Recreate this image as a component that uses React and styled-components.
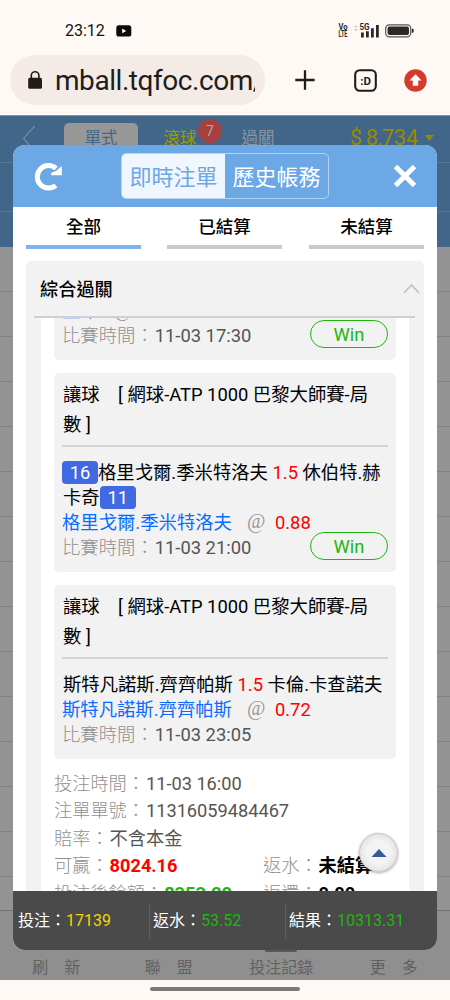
import React from 'react';
import styled, { createGlobalStyle } from 'styled-components';

const GlobalStyle = createGlobalStyle`
	* {
		box-sizing: border-box;
	}
	body {
		margin: 0;
		font-family: Roboto, "Noto Sans CJK TC", sans-serif;
		background: #fef9f5;
	}
`

const Phone = styled.div`
	position: relative;
	display: flex;
	flex-direction: column;
	width: 450px;
	height: 1000px;
	overflow: hidden;
	background: #fef9f5;
`

/* ---------- system and browser bars ---------- */

const StatusBar = styled.div`
	display: flex;
	align-items: center;
	height: 55px;
	padding: 7px 36px 0 65px;
`

const Clock = styled.span`
	width: 51px;
	font-size: 16px;
	line-height: 18px;
	color: #111;
`

const StatusIcons = styled.div`
	display: flex;
	align-items: center;
	margin-left: auto;
`

const AddressBar = styled.div`
	display: flex;
	align-items: center;
	height: 60px;
	padding: 0 23px 10px 10px;
`

const UrlPill = styled.div`
	display: flex;
	align-items: center;
	width: 255px;
	height: 50px;
	padding-left: 18px;
	border-radius: 25px;
	background: #f5ebe6;
`

const Url = styled.span`
	width: 200px;
	margin: 2px 0 0 12px;
	overflow: hidden;
	font-size: 28px;
	line-height: 34px;
	letter-spacing: -.45px;
	color: #201c1a;
	white-space: nowrap;
`

const BarButtons = styled.div`
	display: flex;
	flex: 1;
	align-items: center;
	justify-content: space-between;
	padding-left: 30px;
	svg:nth-child(2) {
		margin-left: 11px;
	}
`

/* ---------- dimmed page behind the dialog ---------- */

const Page = styled.div`
	display: flex;
	flex-direction: column;
	height: 865px;
	background: #939393;
`

const PageHeader = styled.div`
	height: 132px;
	border-top: 1px solid #8d9399;
	background: #416689;
`

const PageNav = styled.div`
	display: flex;
	height: 47px;
	padding: 7px 15px 0 22px;
	border-bottom: 1px solid #5a7690;
`

const PageNavLine = styled.div`
	height: 49px;
	border-bottom: 1px solid #5a7690;
`

const PageTab = styled.div`
	width: ${props => props.$width}px;
	height: 32px;
	margin-left: ${props => props.$left || 0}px;
	border-radius: 5px;
	background: ${props => props.$active ? '#979797' : 'none'};
	color: ${props => props.$color};
	font-size: 16.5px;
	line-height: 32px;
	text-align: center;
`

const PageBadge = styled.span`
	width: 24px;
	height: 24px;
	margin: -4px 0 0 1px;
	border-radius: 50%;
	background: #a4413f;
	color: #b3a4a4;
	font-size: 14px;
	line-height: 24px;
	text-align: center;
`

const Balance = styled.span`
	display: flex;
	gap: 4px;
	align-items: center;
	height: 29px;
	margin-left: auto;
	color: #998900;
	font-size: 22px;
	letter-spacing: -.3px;
	svg {
		margin-left: 1px;
	}
`

const PageRows = styled.div`
	flex: 1;
	overflow: hidden;
`

const PageRow = styled.div`
	height: 45px;
	border-bottom: 1px solid #818181;
`

const PageFooter = styled.div`
	display: flex;
	height: 70px;
	padding: 39px 0 0 0;
	border-top: 1px solid #737373;
	background: #8f8f8f;
`

const PageFooterItem = styled.div`
	position: relative;
	flex: 1;
	color: #616161;
	font-size: 16px;
	line-height: 35px;
	text-align: center;
	white-space: pre;
	&::before {
		content: "";
		position: absolute;
		top: -1px;
		left: 40px;
		width: 32px;
		height: 3px;
		border-radius: 2px;
		background: ${props => props.$active ? '#595959' : 'none'};
	}
`

const HomeBar = styled.div`
	width: 150px;
	height: 4px;
	margin: 7px auto 0;
	border-radius: 2px;
	background: #7d7876;
`

/* ---------- dialog ---------- */

const Dialog = styled.div`
	position: absolute;
	top: 145px;
	left: 13px;
	display: flex;
	flex-direction: column;
	width: 424px;
	height: 805px;
	border-radius: 12px;
	overflow: hidden;
	background: #fff;
`

const DialogHeader = styled.div`
	display: flex;
	flex: none;
	align-items: center;
	justify-content: space-between;
	height: 62px;
	padding: 0 20px 0 21px;
	background: #6ba8e5;
`

const Switch = styled.div`
	display: flex;
	width: 208px;
	height: 46px;
	margin-right: 6px;
	border: 1px solid #b5d4f2;
	border-radius: 5px;
	overflow: hidden;
`

const SwitchItem = styled.span`
	flex: 1;
	background: ${props => props.$active ? '#f0f6fd' : 'none'};
	color: ${props => props.$active ? '#6ba8e5' : '#fff'};
	font-size: 22px;
	line-height: 48px;
	text-align: center;
`

const Tabs = styled.div`
	display: flex;
	flex: none;
	gap: 26px;
	height: 42px;
	padding: 0 13px;
`

const Tab = styled.div`
	width: 115px;
	border-bottom: 4px solid ${props => props.$active ? '#7db2ea' : '#c9c9c9'};
	color: #000;
	font-size: 17.5px;
	font-weight: 500;
	line-height: 41px;
	text-align: center;
	&:last-child {
		margin-left: auto;
	}
`

const Group = styled.div`
	display: flex;
	flex: 1;
	flex-direction: column;
	min-height: 0;
	margin: 12px 13px 0;
	border-radius: 5px 5px 0 0;
	background: #f2f2f2;
`

const GroupHeader = styled.div`
	display: flex;
	flex: none;
	align-items: center;
	justify-content: space-between;
	height: 57px;
	margin: 0 9px 0 8px;
	padding: 0 0 1px 6px;
	border-bottom: 2px solid #d0d0d0;
	font-size: 18.2px;
	font-weight: 500;
	svg {
		margin-right: -5px;
	}
`

const Bets = styled.div`
	flex: 1;
	min-height: 0;
	margin: 0 15px;
	padding: 0 13px;
	overflow: hidden;
	background: #fff;
`

const Card = styled.div`
	margin-top: ${props => props.$scrolled ? '-20px' : '13px'};
	padding: ${props => props.$scrolled ? '0' : '7px'} 8px 12px;
	border-radius: 5px;
	background: #f2f2f2;
	font-size: 18.35px;
	line-height: 25px;
`

const CardTitle = styled.div`
	margin-bottom: 13px;
	padding: 0 1px 5px;
	border-bottom: 2px solid #d4d4d4;
	line-height: 30px;
	white-space: pre-wrap;
`

const Teams = styled.div`
	padding-left: ${props => props.$flush ? 0 : 1}px;
	white-space: nowrap;
`

const Score = styled.span`
	display: inline-block;
	width: 36px;
	height: 23px;
	border-radius: 4px;
	background: #4169e1;
	color: #fff;
	line-height: 23px;
	text-align: center;
`

const Line = styled.span`
	color: #f00;
`

const Pick = styled.div`
	display: flex;
	color: #0a6cff;
`

const At = styled.span`
	width: 18px;
	margin: -1px 10px 1px 15px;
	color: #999;
	font-family: "Liberation Serif", serif;
	font-size: 20px;
`

const Times = styled.div`
	display: flex;
	justify-content: space-between;
	height: 25px;
`

const Label = styled.span`
	color: #909090;
	font-weight: 300;
`

const Value = styled.span`
	margin-left: 1px;
	color: ${props => props.$color || '#555'};
	font-weight: ${props => props.$bold ? 700 : 400};
`

const Win = styled.span`
	width: 78px;
	height: 28px;
	margin-top: -3px;
	border: 1.5px solid #1fb60e;
	border-radius: 14px;
	color: #1fb60e;
	line-height: 27px;
	text-align: center;
`

const Details = styled.div`
	display: grid;
	grid-template-columns: 209px 1fr;
	margin-top: 11px;
	font-size: 18.2px;
	line-height: 27.4px;
	white-space: nowrap;
`

const Wide = styled.div`
	grid-column: 1 / 3;
`

const Totals = styled.div`
	display: flex;
	flex: none;
	align-items: center;
	height: 59px;
	background: #4a4a4a;
`

const Total = styled.div`
	width: 136px;
	height: 36px;
	padding-left: ${props => props.$first ? 5 : 3}px;
	border-left: ${props => props.$first ? 'none' : '1px solid #5e5e5e'};
	color: #fff;
	font-size: 16px;
	line-height: 35px;
	white-space: nowrap;
`

const TotalValue = styled.span`
	color: ${props => props.$color};
`

const TopButton = styled.div`
	position: absolute;
	top: 833px;
	left: 359px;
	display: flex;
	align-items: center;
	justify-content: center;
	width: 39px;
	height: 39px;
	border: 1px solid #c4c4c4;
	border-radius: 50%;
	background: radial-gradient(circle, #f3f3f3 45%, #e2e2e2 75%);
	box-shadow: 0 1px 3px rgba(0, 0, 0, .35);
`

const rows = Array.from({length: 15}, (_, i) => i);

const Pair = ({label, value, color, bold}) => (
    <div>
        <Label>{label}：</Label>
        <Value $color={color} $bold={bold}>{value}</Value>
    </div>
);

// the no-break space keeps the last character and the bracket on one line
const Bet = ({children, pick, odds, time, win}) => (
    <Card>
        <CardTitle>{'讓球　[ 網球-ATP 1000 巴黎大師賽-局數\u00a0]'}</CardTitle>
        {children}
        <Pick>{pick}<At>@</At><Line>{odds}</Line></Pick>
        <Times>
            <Pair label="比賽時間" value={time} />
            {win ? <Win>Win</Win> : null}
        </Times>
    </Card>
);

const Chrome = () => (
    <React.Fragment>
        <StatusBar>
            <Clock>23:12</Clock>
            <svg width="16" height="12" viewBox="0 0 16 12">
                <rect x="0.3" y="0.3" width="15" height="11.2" rx="2.6" fill="#0b0b0b" />
                <path d="M6.2 3.6v4.6L10.2 5.9z" fill="#fff" />
            </svg>
            <StatusIcons>
                <svg width="76" height="18" viewBox="0 0 76 18" fill="#2a2a2a" fontFamily="Roboto" fontWeight="700">
                    <text x="0.5" y="8" fontSize="8.6" textLength="9" lengthAdjust="spacingAndGlyphs">Vo</text>
                    <text x="0.5" y="15.4" fontSize="8.6" textLength="9" lengthAdjust="spacingAndGlyphs">LTE</text>
                    <path d="M16 5.2l2-2 2 2zM16 7.2l2 2 2-2z" fill="#c9c5c2" />
                    <text x="21.5" y="8" fontSize="8.5" textLength="10" lengthAdjust="spacingAndGlyphs">5G</text>
                    <path d="M23 10.5h2.8v5H23zM28 9.2h2.8v6.3H28zM33 6.3h2.8v9.2H33zM38 3h2.8v12.5H38z" />
                    <rect x="47.7" y="2.8" width="25" height="12" rx="3.6" fill="none" stroke="#555" strokeWidth="1.2" />
                    <rect x="49.6" y="4.6" width="21.4" height="8.4" rx="2" />
                    <path d="M73.8 6.6q2 0 2 2.2t-2 2.2z" />
                </svg>
            </StatusIcons>
        </StatusBar>
        <AddressBar>
            <UrlPill>
                <svg width="15" height="19" viewBox="0 0 15 19">
                    <rect x="0.2" y="6.8" width="13.8" height="11" rx="1.6" fill="#201c1a" />
                    <path d="M3.3 7V4.6a3.8 3.8 0 0 1 7.6 0V7" fill="none" stroke="#201c1a" strokeWidth="1.6" />
                </svg>
                <Url>mball.tqfoc.com/</Url>
            </UrlPill>
            <BarButtons>
                <svg width="20" height="20" viewBox="0 0 20 20">
                    <path d="M10 0.3v19.4M0.3 10h19.4" stroke="#201c1a" strokeWidth="2.3" />
                </svg>
                <svg width="23" height="23" viewBox="0 0 23 23">
                    <rect x="1.2" y="1.2" width="20.6" height="20.6" rx="4.5" fill="none" stroke="#201c1a" strokeWidth="2.1" />
                    <text x="11.5" y="15.5" fontSize="11.5" fontWeight="700" fontFamily="Roboto" textAnchor="middle" fill="#201c1a">:D</text>
                </svg>
                <svg width="23" height="23" viewBox="0 0 23 23">
                    <circle cx="11.5" cy="11.5" r="11.2" fill="#d33b2d" />
                    <path d="M11.5 5.3l6 6.3h-3.3v5.2H8.8v-5.2H5.5z" fill="#fff" />
                </svg>
            </BarButtons>
        </AddressBar>
    </React.Fragment>
);

const Background = () => (
    <Page>
        <PageHeader>
            <PageNav>
                <svg width="14" height="26" viewBox="0 0 14 26">
                    <path d="M12.7 3L1.5 15.5L9 24" fill="none" stroke="#7389a0" strokeWidth="1.3" />
                </svg>
                <PageTab $width={74} $left={28} $color="#416689" $active>單式</PageTab>
                <PageTab $width={34} $left={25} $color="#a09a00">滾球</PageTab>
                <PageBadge>7</PageBadge>
                <PageTab $width={34} $left={19} $color="#8a959f">過關</PageTab>
                <Balance>
                    <span>$</span>
                    <span>8,734</span>
                    <svg width="12" height="8" viewBox="0 0 12 8">
                        <path d="M2 1h9L6.5 7z" fill="#998900" />
                    </svg>
                </Balance>
            </PageNav>
            <PageNavLine />
        </PageHeader>
        <PageRows>
            {rows.map(row => <PageRow key={row} />)}
        </PageRows>
        <PageFooter>
            <PageFooterItem>刷　新</PageFooterItem>
            <PageFooterItem>聯　盟</PageFooterItem>
            <PageFooterItem $active>投注記錄</PageFooterItem>
            <PageFooterItem>更　多</PageFooterItem>
        </PageFooter>
    </Page>
);

const App = () => (
    <Phone>
        <GlobalStyle />
        <Chrome />
        <Background />
        <HomeBar />
        <Dialog>
            <DialogHeader>
                <svg width="29" height="29" viewBox="0 0 29 29">
                    <path d="M21.8 23.3A11.2 11.2 0 1 1 22 6.5" fill="none" stroke="#fff" strokeWidth="5" />
                    <path d="M27.8 4v9.2H17.2V10.8L22 9z" fill="#fff" />
                </svg>
                <Switch>
                    <SwitchItem $active>即時注單</SwitchItem>
                    <SwitchItem>歷史帳務</SwitchItem>
                </Switch>
                <svg width="24" height="24" viewBox="0 0 24 24">
                    <path d="M2.5 2.5l19 19M21.5 2.5l-19 19" stroke="#fff" strokeWidth="5" />
                </svg>
            </DialogHeader>
            <Tabs>
                <Tab $active>全部</Tab>
                <Tab>已結算</Tab>
                <Tab>未結算</Tab>
            </Tabs>
            <Group>
                <GroupHeader>
                    綜合過關
                    <svg width="17" height="11" viewBox="0 0 17 11">
                        <path d="M1 10L8.5 2L16 10" fill="none" stroke="#c4c4c4" strokeWidth="1.8" />
                    </svg>
                </GroupHeader>
                <Bets>
                    <Card $scrolled>
                        <Pick>里昂<At>@</At></Pick>
                        <Times>
                            <Pair label="比賽時間" value="11-03 17:30" />
                            <Win>Win</Win>
                        </Times>
                    </Card>
                    <Bet pick="格里戈爾.季米特洛夫" odds="0.88" time="11-03 21:00" win>
                        <Teams $flush><Score>16</Score>格里戈爾.季米特洛夫 <Line>1.5</Line> 休伯特.赫</Teams>
                        <Teams>卡奇<Score>11</Score></Teams>
                    </Bet>
                    <Bet pick="斯特凡諾斯.齊齊帕斯" odds="0.72" time="11-03 23:05">
                        <Teams>斯特凡諾斯.齊齊帕斯 <Line>1.5</Line> 卡倫.卡查諾夫</Teams>
                    </Bet>
                    <Details>
                        <Wide><Pair label="投注時間" value="11-03 16:00" /></Wide>
                        <Wide><Pair label="注單單號" value="11316059484467" /></Wide>
                        <Wide><Pair label="賠率" value="不含本金" /></Wide>
                        <Pair label="可贏" value="8024.16" color="#f00" bold />
                        <Pair label="返水" value="未結算" color="#000" bold />
                        <Pair label="投注後餘額" value="8353.20" color="#1fb60e" bold />
                        <Pair label="返還" value="0.00" color="#000" bold />
                    </Details>
                </Bets>
            </Group>
            <Totals>
                <Total $first>投注：<TotalValue $color="#f2d600">17139</TotalValue></Total>
                <Total>返水：<TotalValue $color="#1fb60e">53.52</TotalValue></Total>
                <Total>結果：<TotalValue $color="#1fb60e">10313.31</TotalValue></Total>
            </Totals>
        </Dialog>
        <TopButton>
            <svg width="16" height="8" viewBox="0 0 16 8">
                <path d="M8 0l7.5 8h-15z" fill="#2f5c9c" />
            </svg>
        </TopButton>
    </Phone>
);

export default App;
